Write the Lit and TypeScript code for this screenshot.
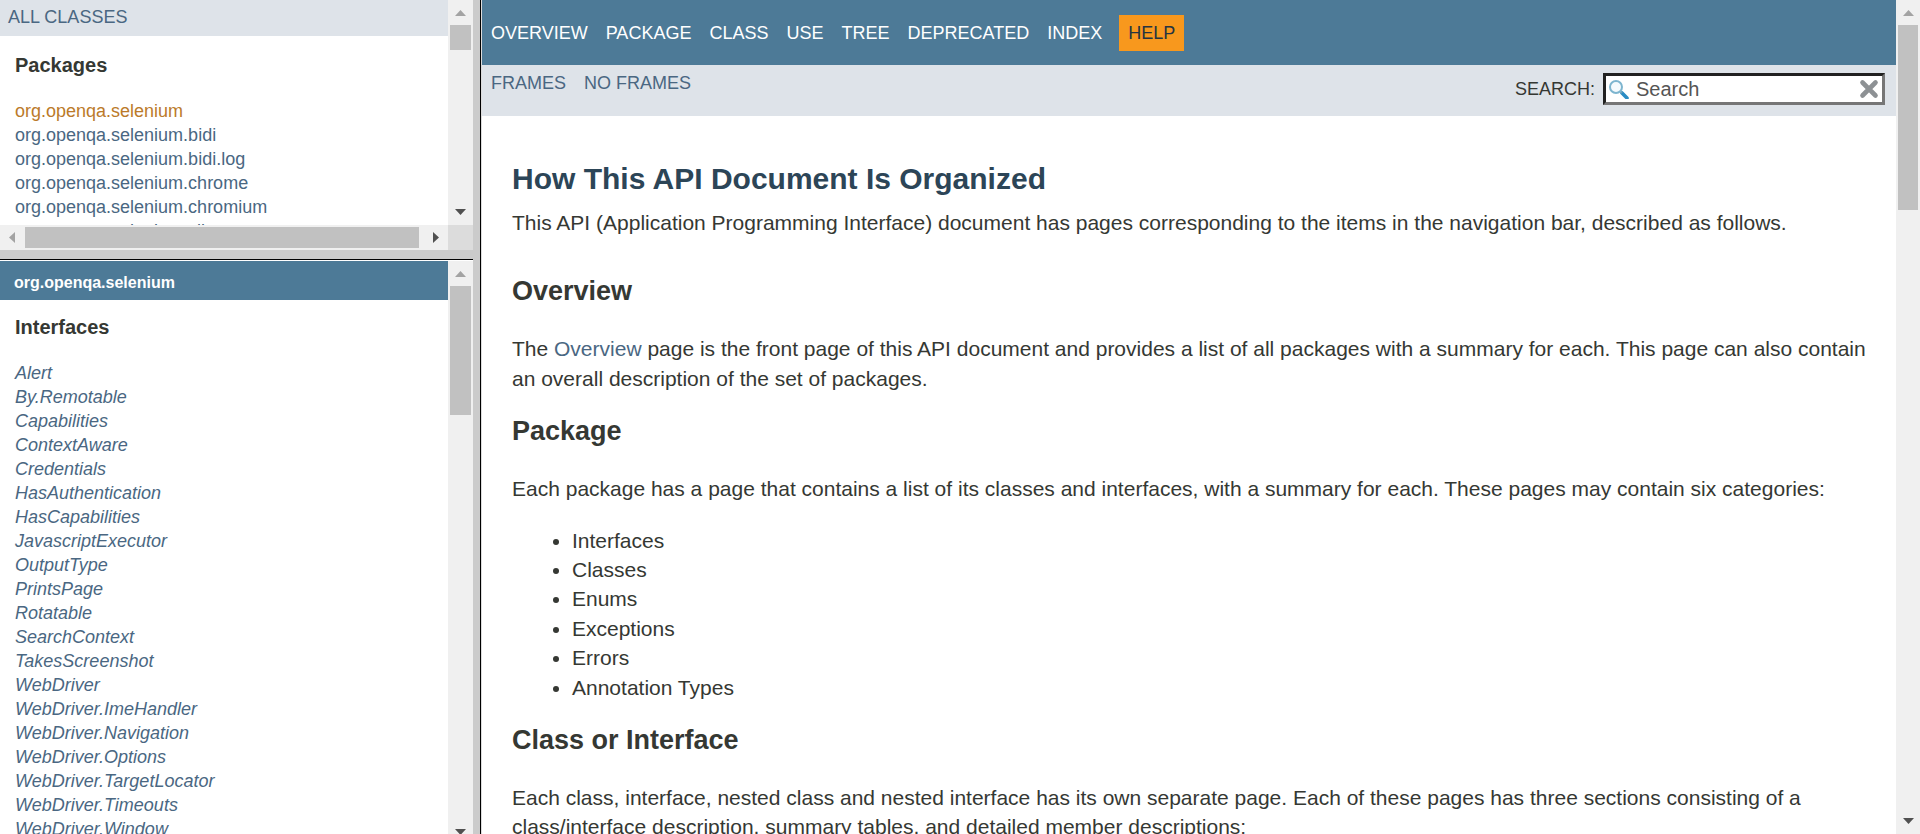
import { LitElement, html, css, svg } from "lit";
import { customElement, property } from "lit/decorators.js";

const packages = [
  "org.openqa.selenium",
  "org.openqa.selenium.bidi",
  "org.openqa.selenium.bidi.log",
  "org.openqa.selenium.chrome",
  "org.openqa.selenium.chromium",
  "org.openqa.selenium.cli",
];

const interfaces = [
  "Alert",
  "By.Remotable",
  "Capabilities",
  "ContextAware",
  "Credentials",
  "HasAuthentication",
  "HasCapabilities",
  "JavascriptExecutor",
  "OutputType",
  "PrintsPage",
  "Rotatable",
  "SearchContext",
  "TakesScreenshot",
  "WebDriver",
  "WebDriver.ImeHandler",
  "WebDriver.Navigation",
  "WebDriver.Options",
  "WebDriver.TargetLocator",
  "WebDriver.Timeouts",
  "WebDriver.Window",
];

const navItems = ["Overview", "Package", "Class", "Use", "Tree", "Deprecated", "Index"];
const categories = ["Interfaces", "Classes", "Enums", "Exceptions", "Errors", "Annotation Types"];

/** Scroll bar with arrow buttons; size is the thumb's share of the track in percent. */
@customElement("scroll-bar")
export class ScrollBar extends LitElement {
  @property() direction: "vertical" | "horizontal" = "vertical";
  @property({ type: Number }) size = 50;

  static styles = css`
    :host {
      display: block;
      background: #f0f0f0;
      min-width: 0;
      min-height: 0;
    }
    .bar {
      display: flex;
      height: 100%;
    }
    .bar.vertical {
      flex-direction: column;
    }
    button {
      flex: none;
      width: 25px;
      height: 25px;
      padding: 0;
      border: 0;
      background: none;
      color: #a3a3a3;
    }
    button.active {
      color: #505050;
    }
    svg {
      display: block;
      width: 25px;
      height: 25px;
      fill: currentColor;
    }
    .track {
      flex: 1;
      min-width: 0;
      min-height: 0;
    }
    .vertical .track {
      padding: 0 2px;
    }
    .horizontal .track {
      padding: 2px 0;
    }
    .thumb {
      width: 100%;
      height: 100%;
      background: #c1c1c1;
    }
  `;

  render() {
    const vertical = this.direction === "vertical";
    const back = vertical ? "M7 16L12.500 10L18 16Z" : "M15 7L9 12.500L15 18Z";
    const forward = vertical ? "M7 9L12.500 15L18 9Z" : "M10 7L16 12.500L10 18Z";
    return html`
      <div class="bar ${this.direction}">
        <button type="button" tabindex="-1" aria-label="Scroll back">
          <svg viewBox="0 0 25 25">${svg`<path d=${back} />`}</svg>
        </button>
        <div class="track">
          <div class="thumb" style=${vertical ? `height:${this.size}%` : `width:${this.size}%`}></div>
        </div>
        <button type="button" class="active" tabindex="-1" aria-label="Scroll forward">
          <svg viewBox="0 0 25 25">${svg`<path d=${forward} />`}</svg>
        </button>
      </div>
    `;
  }
}

@customElement("package-frame")
export class PackageFrame extends LitElement {
  static styles = css`
    :host {
      display: grid;
      grid-template-columns: minmax(0, 1fr) 25px;
      grid-template-rows: minmax(0, 1fr) 25px;
      background: #fff;
    }
    .content {
      overflow: hidden;
    }
    .corner {
      background: #dcdcdc;
    }
    .bar {
      padding: 7px 8px 8px;
      font-size: 18px;
      line-height: 21px;
      background: #dee3e9;
    }
    .list {
      padding: 16px 15px 0;
    }
    h2 {
      margin: 0;
      font-size: 20px;
      line-height: 26px;
      color: #353833;
    }
    ul {
      margin: 21px 0 0;
      padding: 0;
      list-style: none;
      font-size: 18px;
      line-height: 24px;
      white-space: nowrap;
    }
    a {
      color: #4a6782;
      text-decoration: none;
    }
    a.current {
      color: #bb7a2a;
    }
  `;

  render() {
    return html`
      <div class="content">
        <div class="bar"><a href="#">ALL CLASSES</a></div>
        <div class="list">
          <h2>Packages</h2>
          <ul>
            ${packages.map(
              (name, i) => html`<li><a href="#" class=${i === 0 ? "current" : ""}>${name}</a></li>`
            )}
          </ul>
        </div>
      </div>
      <scroll-bar size="14.3"></scroll-bar>
      <scroll-bar direction="horizontal" size="99"></scroll-bar>
      <div class="corner"></div>
    `;
  }
}

@customElement("class-frame")
export class ClassFrame extends LitElement {
  static styles = css`
    :host {
      display: grid;
      grid-template-columns: minmax(0, 1fr) 25px;
      grid-template-rows: minmax(0, 1fr);
      padding-top: 1px;
      background: #fff;
    }
    .content {
      overflow: hidden;
    }
    h1 {
      margin: 0;
      padding: 12px 14px 7px;
      font-size: 16px;
      line-height: 20px;
      background: #4d7a97;
    }
    h1 a {
      color: #fff;
    }
    .list {
      padding: 14px 15px 0;
    }
    h2 {
      margin: 0;
      font-size: 20px;
      line-height: 26px;
      color: #353833;
    }
    ul {
      margin: 21px 0 0;
      padding: 0;
      list-style: none;
      font-size: 18px;
      line-height: 24px;
      font-style: italic;
    }
    a {
      color: #4a6782;
      text-decoration: none;
    }
  `;

  render() {
    return html`
      <div class="content">
        <h1><a href="#">org.openqa.selenium</a></h1>
        <div class="list">
          <h2>Interfaces</h2>
          <ul>
            ${interfaces.map((name) => html`<li><a href="#">${name}</a></li>`)}
          </ul>
        </div>
      </div>
      <scroll-bar size="24.2"></scroll-bar>
    `;
  }
}

@customElement("help-frame")
export class HelpFrame extends LitElement {
  static styles = css`
    :host {
      display: grid;
      grid-template-columns: minmax(0, 1fr) 24px;
      grid-template-rows: minmax(0, 1fr);
      background: #fff;
    }
    .page {
      display: flex;
      flex-direction: column;
      overflow: hidden;
    }
    a {
      color: #4a6782;
      text-decoration: none;
    }
    nav {
      flex: none;
    }
    .top,
    .frames {
      display: flex;
      margin: 0;
      padding: 0;
      list-style: none;
      font-size: 18px;
      line-height: 22px;
      text-transform: uppercase;
    }
    .top {
      gap: 18px;
      padding: 15px 9px 14px;
      background: #4d7a97;
    }
    .top li {
      padding: 7px 0;
    }
    .top a {
      color: #fff;
    }
    .top .current {
      margin-left: -1px;
      padding: 7px 9px;
      color: #253441;
      background: #f8981d;
    }
    .sub {
      display: flex;
      justify-content: space-between;
      padding: 8px 11px 11px 9px;
      background: #dee3e9;
    }
    .frames {
      gap: 18px;
    }
    .frames li {
      line-height: 20px;
    }
    .search {
      display: flex;
      align-items: center;
      gap: 8px;
      font-size: 18px;
      color: #353833;
    }
    .box {
      display: flex;
      align-items: center;
      box-sizing: border-box;
      width: 282px;
      height: 32px;
      padding: 0 3px;
      gap: 7px;
      border: 3px inset #767676;
      background: #fff;
    }
    .box svg {
      flex: none;
      display: block;
    }
    input {
      flex: 1;
      min-width: 0;
      padding: 0;
      border: 0;
      outline: 0;
      background: none;
      font: 20px/24px "Liberation Sans", Arial, sans-serif;
      color: #353833;
    }
    input::placeholder {
      color: #555;
      opacity: 1;
    }
    .box button {
      flex: none;
      padding: 0;
      border: 0;
      background: none;
    }
    main {
      padding: 45px 30px 0;
      font-size: 21px;
      line-height: 1.4;
      color: #353833;
    }
    h1 {
      margin: 0;
      font-size: 30px;
      line-height: 36px;
      color: #2c4557;
    }
    h2 {
      margin: 0;
      font-size: 27px;
      line-height: 32px;
    }
    p {
      margin: 0;
    }
    .intro {
      padding: 11px 0 38px;
    }
    .text {
      padding: 27px 0 22px;
    }
    ul.kinds {
      margin: 0;
      padding: 0 0 22px 60px;
    }
  `;

  render() {
    return html`
      <div class="page">
        <nav>
          <ul class="top">
            ${navItems.map((item) => html`<li><a href="#">${item}</a></li>`)}
            <li class="current">Help</li>
          </ul>
          <div class="sub">
            <ul class="frames">
              <li><a href="#">Frames</a></li>
              <li><a href="#">No Frames</a></li>
            </ul>
            <div class="search">
              <label for="search">SEARCH:</label>
              <div class="box">
                <svg width="20" height="20" viewBox="0 0 20 20" fill="none">
                  <path d="M13 14L18 19" stroke="#2a8cc4" stroke-width="3.600" stroke-linecap="round" />
                  <path d="M11.500 12.500L13 14" stroke="#6f9fb8" stroke-width="2" />
                  <circle cx="7" cy="8" r="6" stroke="#7db5cf" stroke-width="2" fill="#f4fafd" />
                </svg>
                <input id="search" type="text" placeholder="Search" />
                <button type="reset" aria-label="Clear search">
                  <svg width="20" height="20" viewBox="0 0 20 20" fill="none">
                    <path d="M3.500 3.500L16.500 16.500M16.500 3.500L3.500 16.500" stroke="#8d9194" stroke-width="4.600" stroke-linecap="round" />
                  </svg>
                </button>
              </div>
            </div>
          </div>
        </nav>
        <main>
          <h1>How This API Document Is Organized</h1>
          <p class="intro">
            This API (Application Programming Interface) document has pages corresponding to the items in the
            navigation bar, described as follows.
          </p>
          <h2>Overview</h2>
          <p class="text">
            The <a href="#">Overview</a> page is the front page of this API document and provides a list of all
            packages with a summary for each. This page can also contain an overall description of the set of
            packages.
          </p>
          <h2>Package</h2>
          <p class="text">
            Each package has a page that contains a list of its classes and interfaces, with a summary for each.
            These pages may contain six categories:
          </p>
          <ul class="kinds">
            ${categories.map((name) => html`<li>${name}</li>`)}
          </ul>
          <h2>Class or Interface</h2>
          <p class="text">
            Each class, interface, nested class and nested interface has its own separate page. Each of these
            pages has three sections consisting of a class/interface description, summary tables, and detailed
            member descriptions:
          </p>
        </main>
      </div>
      <scroll-bar size="23.6"></scroll-bar>
    `;
  }
}

@customElement("app-root")
export class AppRoot extends LitElement {
  static styles = css`
    :host {
      display: grid;
      grid-template-columns: 25% minmax(0, 1fr);
      grid-template-rows: minmax(0, 1fr);
      height: 100vh;
      overflow: hidden;
      font-family: "Liberation Sans", Arial, Helvetica, sans-serif;
    }
    .left {
      display: grid;
      grid-template-rows: minmax(0, 259fr) minmax(0, 575fr);
      padding-right: 7px;
      min-height: 0;
      background: #cbcbcb;
    }
    .packages {
      border-bottom: 9px solid #cbcbcb;
    }
    .classes {
      margin-bottom: -11px;
      border-top: 1px solid #000;
    }
    .help {
      min-height: 0;
      border-left: 1px solid #000;
    }
    .help help-frame {
      height: 100%;
      border-left: 1px solid #dcdcdc;
    }
  `;

  render() {
    return html`
      <div class="left">
        <package-frame class="packages"></package-frame>
        <class-frame class="classes"></class-frame>
      </div>
      <div class="help"><help-frame></help-frame></div>
    `;
  }
}
